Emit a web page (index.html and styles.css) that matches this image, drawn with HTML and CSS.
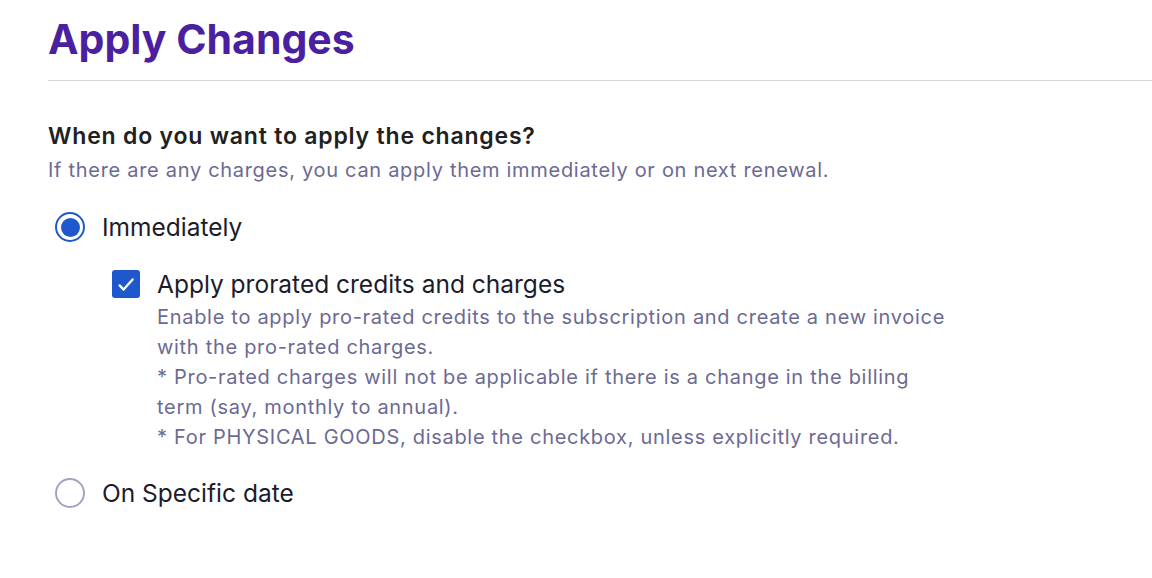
FILE: index.html
```html
<!DOCTYPE html>
<html lang="en">
<head>
    <meta charset="UTF-8">
    <meta name="viewport" content="width=device-width, initial-scale=1.0">
    <title>Apply Changes</title>
    <link rel="stylesheet" href="styles.css">
</head>
<body>

    <div class="page">
        <!-- Header -->
        <div class="header">
            <h1>Apply Changes</h1>
        </div>

        <div class="section">
            <h2>When do you want to apply the changes?</h2>
            <p class="hint">If there are any charges, you can apply them immediately or on next renewal.</p>

            <!-- Immediately option -->
            <label class="option">
                <span class="radio checked"></span>
                <span class="option-label">Immediately</span>
            </label>

            <div class="sub-option">
                <span class="checkbox">
                    <svg width="28" height="28" viewBox="0 0 28 28">
                        <path d="M7.6 15.4 L11.6 19.6 L20.6 9.4" fill="none" stroke="#fff" stroke-width="2.3" stroke-linecap="round" stroke-linejoin="round"/>
                    </svg>
                </span>
                <div class="sub-text">
                    <div class="option-label">Apply prorated credits and charges</div>
                    <p class="desc">Enable to apply pro-rated credits to the subscription and create a new invoice with the pro-rated charges.<br>
                    * Pro-rated charges will not be applicable if there is a change in the billing term (say, monthly to annual).<br>
                    * For PHYSICAL GOODS, disable the checkbox, unless explicitly required.</p>
                </div>
            </div>

            <!-- Specific date option -->
            <label class="option last">
                <span class="radio"></span>
                <span class="option-label">On Specific date</span>
            </label>
        </div>
    </div>

</body>
</html>
```

FILE: styles.css
```css
body {
    font-family: Inter, "Noto Sans", sans-serif;
    background-color: #fff;
    margin: 0;
    padding: 0;
}
.page {
    padding-left: 48px;
}

/* Header */
.header {
    border-bottom: 1px solid #d6d6d9;
    padding-top: 14px;
    padding-bottom: 15px;
}
.header h1 {
    margin: 0;
    font-size: 41px;
    line-height: 51px;
    font-weight: 700;
    color: #4a1fa0;
}

/* Section */
.section {
    padding-top: 41px;
}
.section h2 {
    margin: 0;
    font-size: 23px;
    line-height: 28px;
    font-weight: 600;
    letter-spacing: 0.8px;
    color: #212121;
}
.hint {
    margin: 6px 0 0 0;
    font-size: 20px;
    line-height: 28px;
    letter-spacing: 0.7px;
    color: #6b6a93;
}

.option {
    display: flex;
    align-items: center;
    gap: 17px;
    margin-top: 28px;
    margin-left: 7px;
    cursor: pointer;
}
.option.last {
    margin-top: 26px;
}
.option-label {
    font-size: 24.5px;
    line-height: 30px;
    color: #1c1c2b;
}

.radio {
    box-sizing: border-box;
    width: 30px;
    height: 30px;
    border-radius: 50%;
    border: 2.5px solid #a3a2c0;
    flex-shrink: 0;
    display: flex;
    align-items: center;
    justify-content: center;
}
.radio.checked {
    border-color: #1f58cc;
}
.radio.checked::after {
    content: "";
    width: 19px;
    height: 19px;
    border-radius: 50%;
    background-color: #1f58cc;
}

.sub-option {
    display: flex;
    align-items: flex-start;
    gap: 17px;
    margin-top: 27px;
    margin-left: 64px;
}
.checkbox {
    width: 28px;
    height: 28px;
    border-radius: 3px;
    background-color: #1f58cc;
    display: flex;
    align-items: center;
    justify-content: center;
    flex-shrink: 0;
    margin-top: 1px;
}
.desc {
    margin: 3px 0 0 0;
    font-size: 20px;
    line-height: 30px;
    letter-spacing: 0.7px;
    color: #6b6a93;
    max-width: 794px;
}
```
